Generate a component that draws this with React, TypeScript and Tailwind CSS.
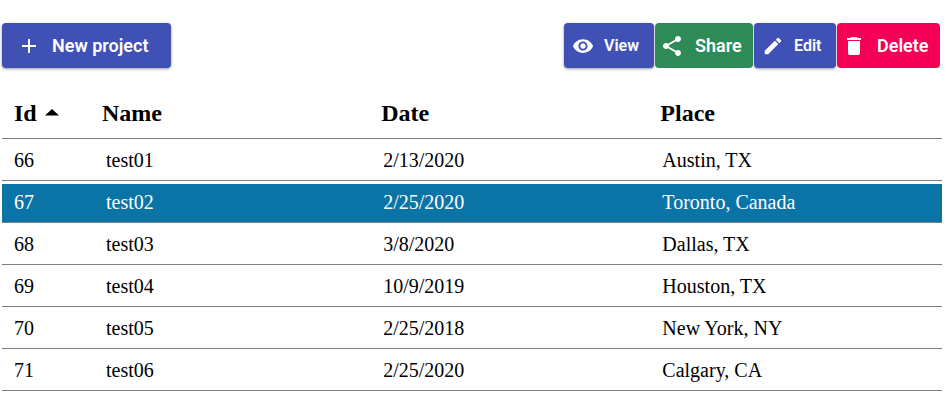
import { useState } from "react";
import { MdAdd, MdDelete, MdEdit, MdShare, MdVisibility } from "react-icons/md";

const projects = [
  { id: 66, name: "test01", date: "2/13/2020", place: "Austin, TX" },
  { id: 67, name: "test02", date: "2/25/2020", place: "Toronto, Canada" },
  { id: 68, name: "test03", date: "3/8/2020", place: "Dallas, TX" },
  { id: 69, name: "test04", date: "10/9/2019", place: "Houston, TX" },
  { id: 70, name: "test05", date: "2/25/2018", place: "New York, NY" },
  { id: 71, name: "test06", date: "2/25/2020", place: "Calgary, CA" },
];

const button =
  "flex h-[45px] items-center rounded font-semibold text-white font-[Roboto,sans-serif]";
const raised = "bg-[#3f51b5] shadow-[0_1px_3px_rgba(0,0,0,0.4)]";
const large = "gap-[11px] text-[18px]";
const small = "gap-[10px] text-[16px]";
const head = "border-b border-[#808080] pb-[11px] pl-[10px] text-left";
const cell = "border-b border-[#808080] pt-[6px] pb-[8px]";

export default function App() {
  const [selected, setSelected] = useState(67);

  return (
    <main className="bg-white pt-[23px] pr-[7px] pb-4 pl-[2px] font-['Liberation_Serif','Times_New_Roman',serif] text-black">
      <div className="flex justify-between pr-[2px]">
        <button type="button" className={`${button} ${raised} ${large} min-w-[169px] pl-[15px]`}>
          <MdAdd size={24} aria-hidden="true" />
          New project
        </button>
        <div className="flex gap-px">
          <button type="button" className={`${button} ${raised} ${small} min-w-[90px] pl-2`}>
            <MdVisibility size={22} aria-hidden="true" />
            View
          </button>
          <button type="button" className={`${button} ${large} min-w-[98px] bg-[#2e8b57] pl-[5px]`}>
            <MdShare size={24} aria-hidden="true" />
            Share
          </button>
          <button type="button" className={`${button} ${raised} ${small} min-w-[82px] pl-2`}>
            <MdEdit size={22} aria-hidden="true" />
            Edit
          </button>
          <button type="button" className={`${button} ${large} min-w-[103px] bg-[#f50057] pl-[5px]`}>
            <MdDelete size={24} aria-hidden="true" />
            Delete
          </button>
        </div>
      </div>

      <table className="mt-7 w-full table-fixed border-separate border-spacing-x-0 border-spacing-y-[3px]">
        <thead className="text-[24px] leading-7">
          <tr>
            <th scope="col" aria-sort="ascending" className="w-[90px] border-b border-[#808080] pb-[11px] pl-3 text-left">
              <button type="button" className="flex items-center gap-2">
                Id
                <svg width="14" height="8" viewBox="0 0 14 8" aria-hidden="true">
                  <path d="M7 0 14 6.5H0Z" fill="currentColor" />
                </svg>
              </button>
            </th>
            <th scope="col" className={`${head} w-[29.7%]`}>Name</th>
            <th scope="col" className={`${head} w-[29.7%]`}>Date</th>
            <th scope="col" className={head}>Place</th>
          </tr>
        </thead>
        <tbody className="text-[20px] leading-6">
          {projects.map((p) => (
            <tr
              key={p.id}
              onClick={() => setSelected(p.id)}
              aria-selected={p.id === selected}
              className={p.id === selected ? "bg-[#0b74a6] text-white" : ""}
            >
              <td className={`${cell} pl-3`}>{p.id}</td>
              <td className={`${cell} pl-[14px]`}>{p.name}</td>
              <td className={`${cell} pl-3`}>{p.date}</td>
              <td className={`${cell} pl-3`}>{p.place}</td>
            </tr>
          ))}
        </tbody>
      </table>
    </main>
  );
}
